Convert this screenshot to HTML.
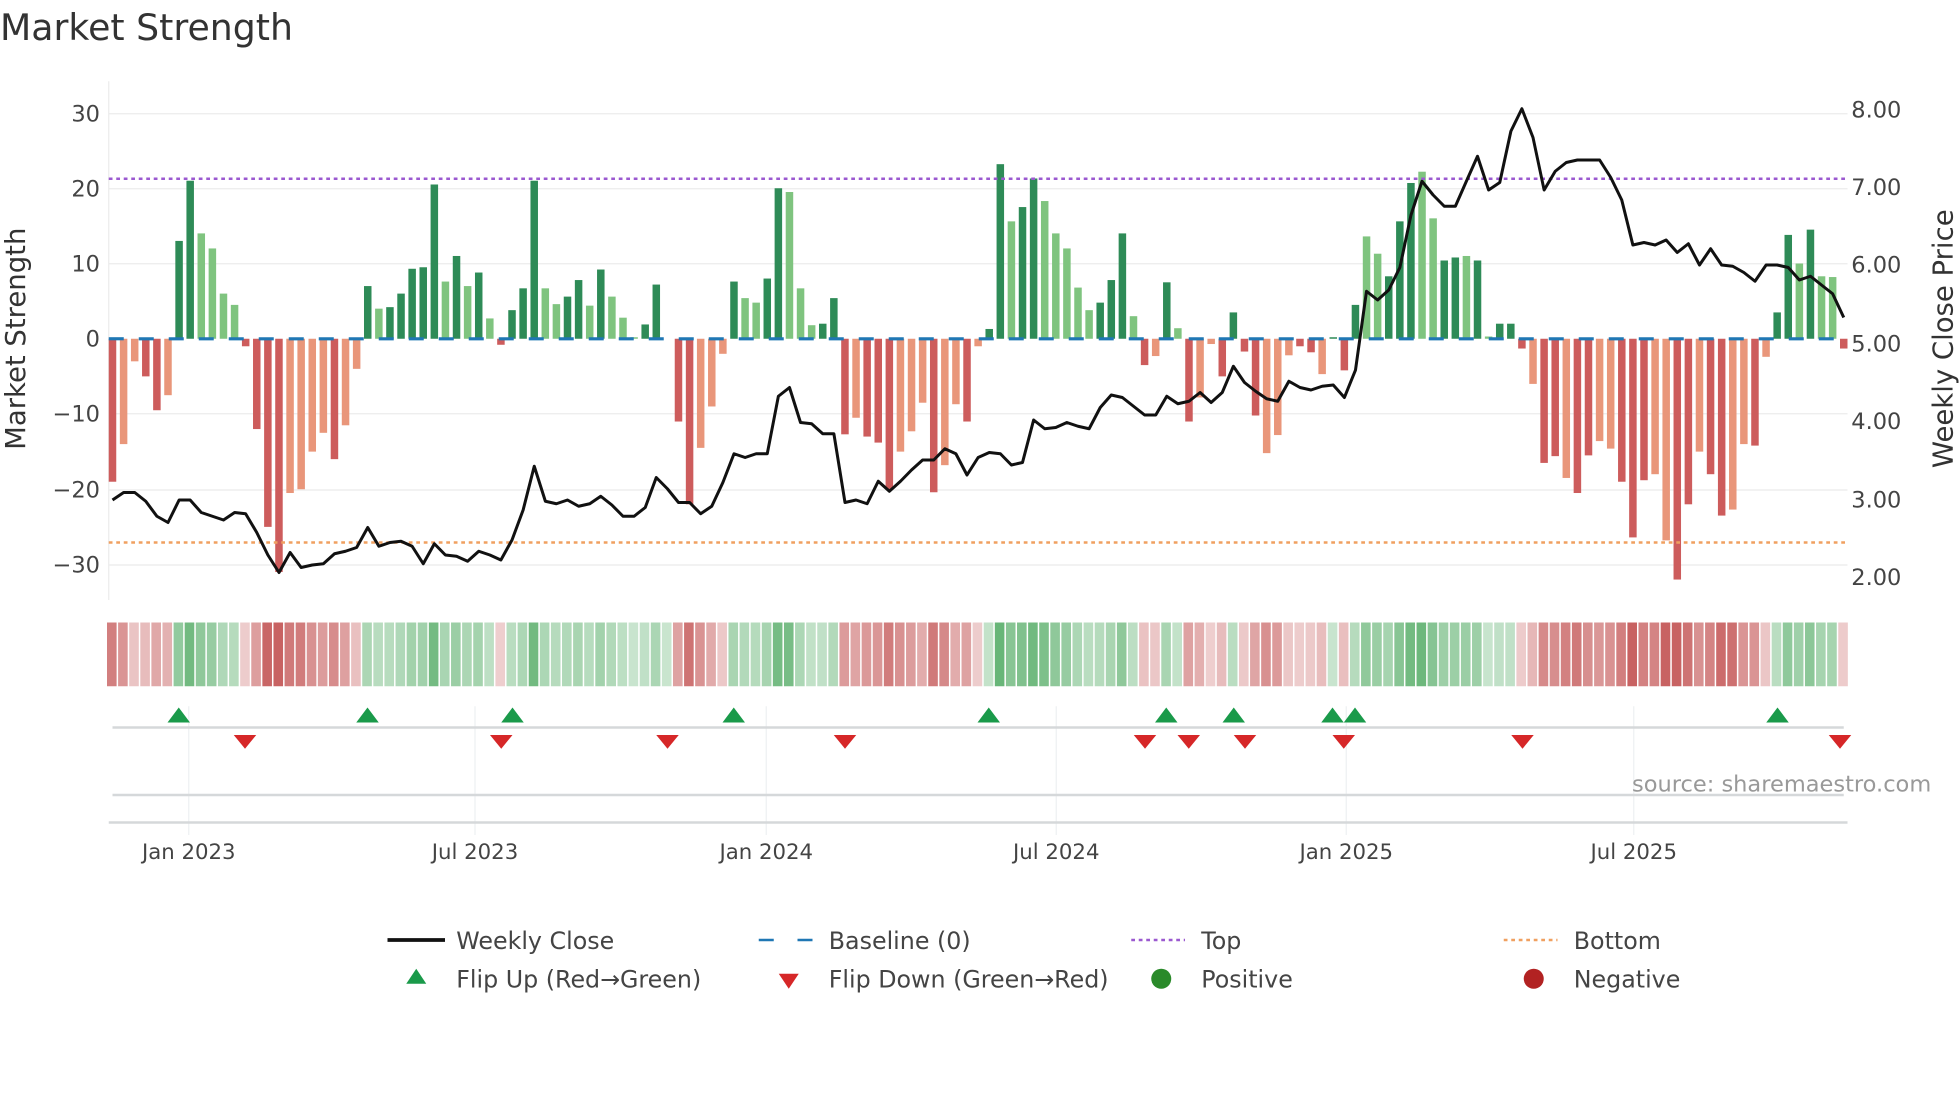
<!DOCTYPE html>
<html><head><meta charset="utf-8"><style>
html,body{margin:0;padding:0;background:#fff;}
svg{display:block;font-family:"DejaVu Sans","Liberation Sans",sans-serif;}
</style></head><body>
<svg id="s" width="1960" height="1102" viewBox="0 0 1568 881.6" xmlns="http://www.w3.org/2000/svg">
<rect width="1568" height="882" fill="#fff"/>
<text x="0" y="32" font-size="29" fill="#333">Market Strength</text>
<g stroke="#ebebeb" stroke-width="1">
<line x1="87" x2="1478" y1="91" y2="91"/><line x1="87" x2="1478" y1="151" y2="151"/><line x1="87" x2="1478" y1="211" y2="211"/><line x1="87" x2="1478" y1="331" y2="331"/><line x1="87" x2="1478" y1="392" y2="392"/><line x1="87" x2="1478" y1="452" y2="452"/>
<line x1="87" x2="87" y1="65" y2="480"/>
</g>
<g font-size="18" fill="#444" text-anchor="end">
<text x="80" y="97">30</text><text x="80" y="157">20</text><text x="80" y="217">10</text><text x="80" y="277">0</text><text x="80" y="337">−10</text><text x="80" y="398">−20</text><text x="80" y="458">−30</text>
</g>
<g font-size="18" fill="#444">
<text x="1481" y="94">8.00</text><text x="1481" y="156">7.00</text><text x="1481" y="218">6.00</text><text x="1481" y="281">5.00</text><text x="1481" y="343">4.00</text><text x="1481" y="406">3.00</text><text x="1481" y="468">2.00</text>
</g>
<text transform="translate(20,271) rotate(-90)" font-size="22" fill="#333" text-anchor="middle">Market Strength</text>
<text transform="translate(1562,271) rotate(-90)" font-size="22" fill="#333" text-anchor="middle">Weekly Close Price</text>
<g id="bars"></g>
<line x1="87" x2="1478" y1="271" y2="271" stroke="#1f77b4" stroke-width="2.5" stroke-dasharray="12,12"/>
<line x1="87" x2="1478" y1="143" y2="143" stroke="#9b59d0" stroke-width="2" stroke-dasharray="3,3"/>
<line x1="87" x2="1478" y1="434" y2="434" stroke="#f0a060" stroke-width="2" stroke-dasharray="3,3"/>
<polyline id="price" fill="none" stroke="#111" stroke-width="2.4" stroke-linejoin="round"/>
<g id="heat"></g>
<g stroke="#eef0f2" stroke-width="1">
<line x1="151" x2="151" y1="565" y2="668"/><line x1="380" x2="380" y1="565" y2="668"/><line x1="613" x2="613" y1="565" y2="668"/><line x1="845" x2="845" y1="565" y2="668"/><line x1="1077" x2="1077" y1="565" y2="668"/><line x1="1307" x2="1307" y1="565" y2="668"/>
</g>
<line x1="90" x2="1475" y1="582" y2="582" stroke="#d5d8da" stroke-width="2"/>
<line x1="90" x2="1475" y1="636" y2="636" stroke="#d5d8da" stroke-width="2"/>
<line x1="87" x2="1478" y1="658" y2="658" stroke="#d5d8da" stroke-width="2"/>
<g id="marks"></g>
<text x="1545" y="633" font-size="18" fill="#999" text-anchor="end">source: sharemaestro.com</text>
<g font-size="17" fill="#444" text-anchor="middle">
<text x="151" y="687">Jan 2023</text><text x="380" y="687">Jul 2023</text><text x="613" y="687">Jan 2024</text><text x="845" y="687">Jul 2024</text><text x="1077" y="687">Jan 2025</text><text x="1307" y="687">Jul 2025</text>
</g>
<g font-size="19" fill="#444">
<line x1="310" x2="356" y1="752" y2="752" stroke="#111" stroke-width="3"/>
<text x="365" y="759">Weekly Close</text>
<line x1="607" x2="650" y1="752" y2="752" stroke="#1f77b4" stroke-width="2" stroke-dasharray="12,19"/>
<text x="663" y="759">Baseline (0)</text>
<line x1="905" x2="948" y1="752" y2="752" stroke="#9b59d0" stroke-width="2" stroke-dasharray="3,3"/>
<text x="961" y="759">Top</text>
<line x1="1203" x2="1246" y1="752" y2="752" stroke="#f0a060" stroke-width="2" stroke-dasharray="3,3"/>
<text x="1259" y="759">Bottom</text>
<polygon points="333,775 325,787 341,787" fill="#1a9a4a"/>
<text x="365" y="790">Flip Up (Red→Green)</text>
<polygon points="623,779 639,779 631,791" fill="#d62728"/>
<text x="663" y="790">Flip Down (Green→Red)</text>
<circle cx="929" cy="783" r="8" fill="#2a8a2a"/>
<text x="961" y="790">Positive</text>
<circle cx="1227" cy="783" r="8" fill="#b22222"/>
<text x="1259" y="790">Negative</text>
</g>
</svg>
<script>
var V=[-19,-14,-3,-5,-9.5,-7.5,13,21,14,12,6,4.5,-1,-12,-25,-31,-20.5,-20,-15,-12.5,-16,-11.5,-4,7,4,4.2,6,9.3,9.5,20.5,7.6,11,7,8.8,2.7,-0.8,3.8,6.7,21,6.7,4.6,5.6,7.8,4.4,9.2,5.6,2.8,0.2,1.9,7.2,0,-11,-22,-14.5,-9,-2,7.6,5.4,4.8,8,20,19.5,6.7,1.8,2,5.4,-12.7,-10.5,-13,-13.8,-20,-15,-12.3,-8.5,-20.4,-16.8,-8.7,-11,-1,1.3,23.2,15.6,17.5,21.3,18.3,14,12,6.8,3.8,4.8,7.8,14,3,-3.5,-2.3,7.5,1.4,-11,-7.8,-0.7,-5,3.5,-1.7,-10.2,-15.2,-12.8,-2.2,-1,-1.8,-4.7,0.2,-4.2,4.5,13.6,11.3,8.3,15.6,20.7,22.2,16,10.4,10.8,11,10.4,0.3,2,2,-1.3,-6,-16.5,-15.6,-18.5,-20.5,-15.5,-13.6,-14.6,-19,-26.4,-18.8,-18,-26.8,-32,-22,-15,-18,-23.5,-22.7,-14,-14.2,-2.4,3.5,13.8,10,14.5,8.3,8.2,-1.3];
var D=[1,0,0,1,1,0,1,1,0,0,0,0,1,1,1,1,0,0,0,0,1,0,0,1,0,1,1,1,1,1,0,1,0,1,0,1,1,1,1,0,0,1,1,0,1,0,0,0,1,1,0,1,1,0,0,0,1,0,0,1,1,0,0,0,1,1,1,0,1,1,1,0,0,0,1,0,0,1,0,1,1,0,1,1,0,0,0,0,0,1,1,1,0,1,0,1,0,1,0,0,1,1,1,1,0,0,0,1,1,0,1,1,1,0,0,1,1,1,0,0,1,1,0,1,0,1,1,1,0,1,1,0,1,1,0,0,1,1,1,0,0,1,1,0,1,1,0,0,1,0,1,1,0,1,0,0,1];
var P=[400,394,394,401,413,418,400,400,410,413,416,410,411,426,444,458,442,454,452,451,443,441,438,422,437,434,433,437,451,435,444,445,449,441,444,448,432,408,373,401,403,400,405,403,397,404,413,413,406,382,391,402,402,411,405,386,363,366,363,363,317,310,338,339,347,347,402,400,403,385,393,385,376,368,368,359,363,380,366,362,363,372,370,336,343,342,338,341,343,326,316,318,325,332,332,317,323,321,314,322,314,293,306,313,319,321,305,310,312,309,308,318,296,233,240,232,214,172,145,156,165,165,145,125,152,146,105,87,110,152,137,130,128,128,128,142,160,196,194,196,192,202,195,212,199,212,213,218,225,212,212,214,224,221,228,235,254];
var n=V.length,step=(1475-90)/(n-1),ns="http://www.w3.org/2000/svg";
function el(t,a,p){var e=document.createElementNS(ns,t);for(var k in a)e.setAttribute(k,a[k]);document.getElementById(p).appendChild(e);return e;}
var pts=[];
for(var i=0;i<n;i++){var x=90+i*step,v=V[i],d=D[i]!==undefined?D[i]:1;
 var c=v>=0?(d?"#2e8b57":"#7fc47f"):(d?"#cd5c5c":"#e9967a");
 var y0=271,y1=271-v*6.02;
 if(Math.abs(v)>0.05)el("rect",{x:x-3,y:Math.min(y0,y1),width:6,height:Math.abs(y1-y0),fill:c},"bars");
 var a=Math.min(Math.abs(v)/26,1);
 var hc=v>=0?"rgba(60,160,80,"+(0.28+0.55*a)+")":"rgba(190,70,70,"+(0.25+0.6*a)+")";
 el("rect",{x:x-4.4,y:498,width:step-1.2,height:51,fill:hc},"heat");
 if(P[i]!==undefined)pts.push(x.toFixed(1)+","+P[i]);}
document.getElementById("price").setAttribute("points",pts.join(" "));
[143,294,410,587,791,933,987,1066,1084,1422].forEach(function(x){el("polygon",{points:(x)+",566 "+(x-9)+",578 "+(x+9)+",578",fill:"#1a9a4a"},"marks");});
[196,401,534,676,916,951,996,1075,1218,1472].forEach(function(x){el("polygon",{points:(x-9)+",588 "+(x+9)+",588 "+x+",599",fill:"#d62728"},"marks");});
</script>
</body></html>
